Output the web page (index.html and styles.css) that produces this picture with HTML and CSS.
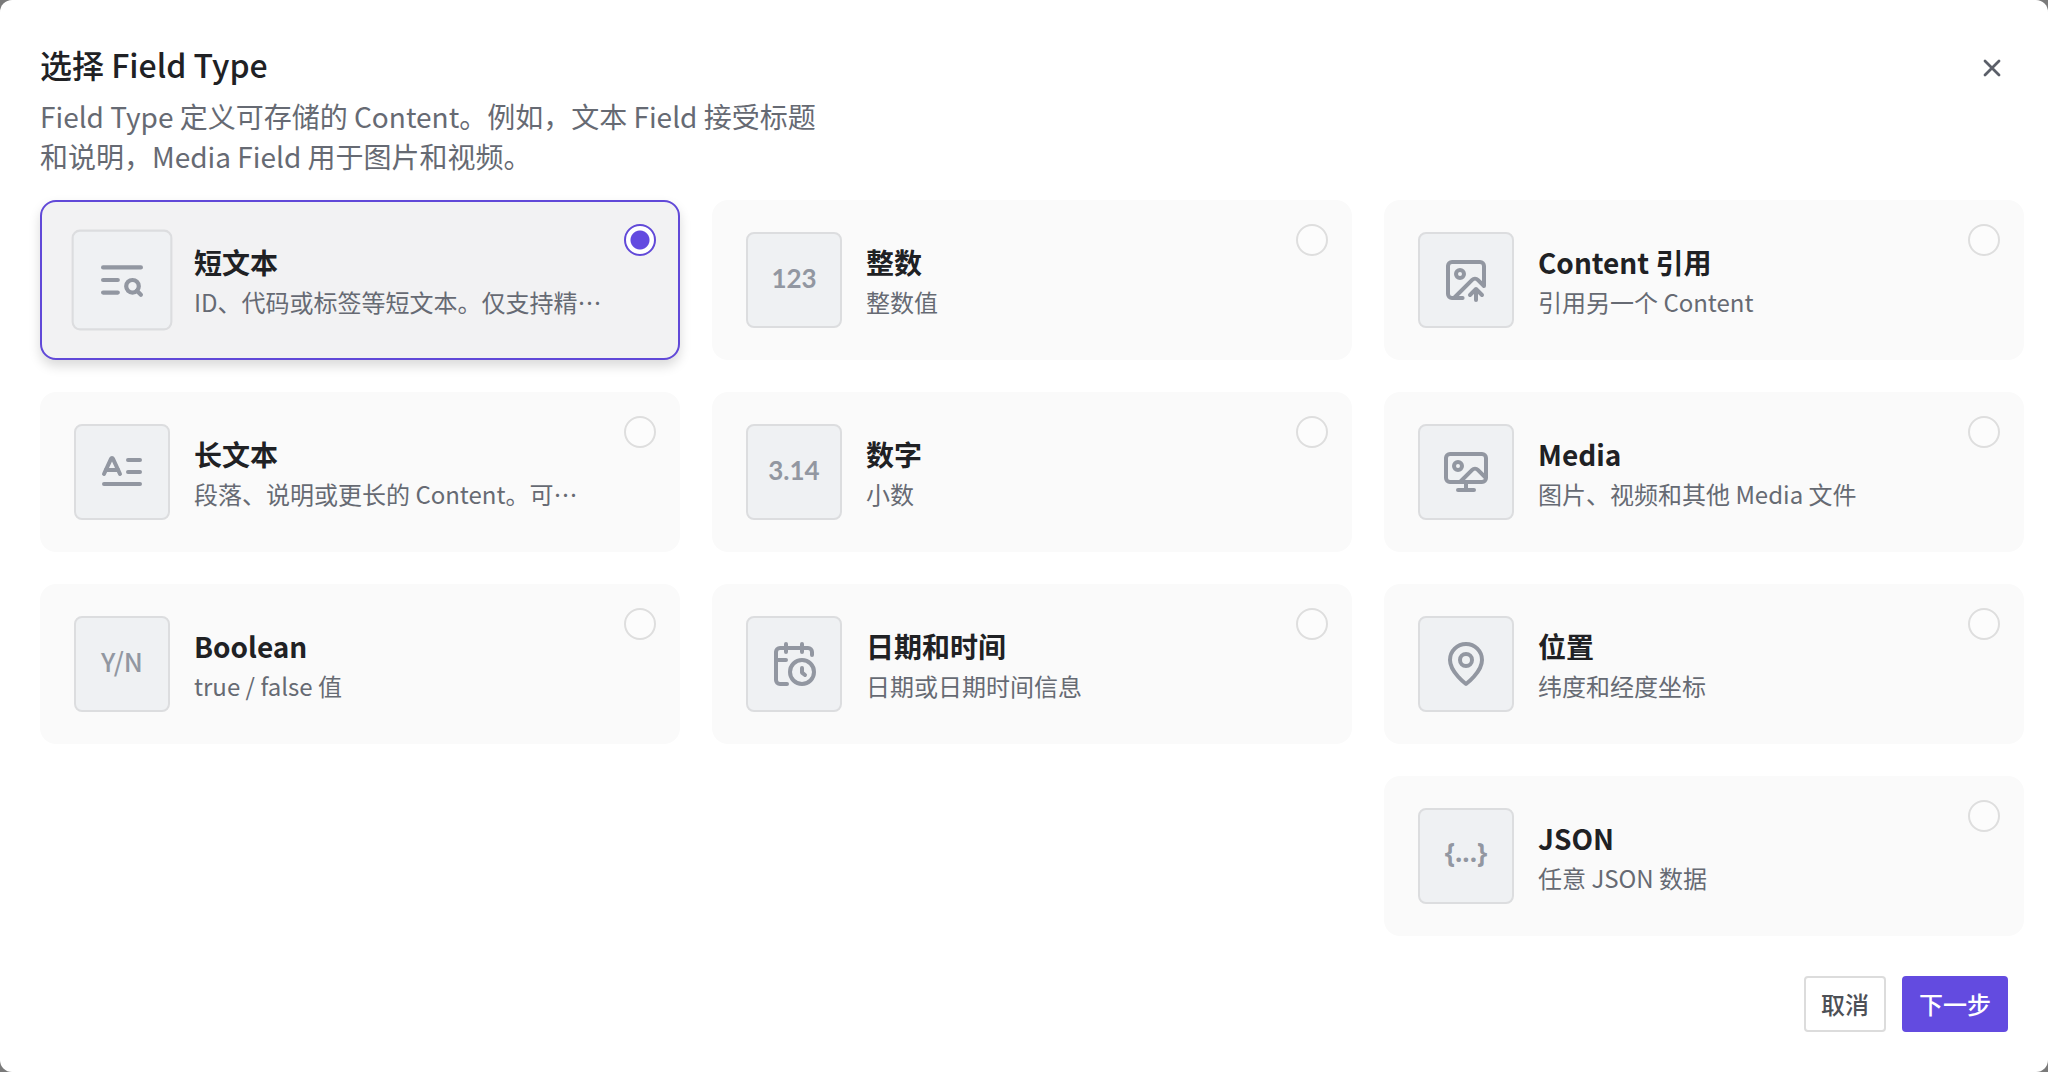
FILE: index.html
```html
<!DOCTYPE html>
<html lang="zh-CN">
<head>
  <meta charset="UTF-8">
  <meta name="viewport" content="width=device-width, initial-scale=1.0">
  <title>选择 Field Type</title>
  <link rel="stylesheet" href="styles.css">
</head>
<body>

  <form class="dialog">
    <header class="dialog-header">
      <div class="heading">
        <h1>选择 Field Type</h1>
        <p>Field Type 定义可存储的 Content。例如，文本 Field 接受标题和说明，Media Field 用于图片和视频。</p>
      </div>
      <button type="button" class="close-button" aria-label="关闭">
        <svg class="close-icon" viewBox="0 0 24 24"><path d="M18 6 6 18M6 6l12 12"/></svg>
      </button>
    </header>

    <div class="columns">
      <div class="column">
        <label class="card">
          <span class="icon-box">
            <svg class="icon" viewBox="0 0 24 24">
              <path d="M21 6H3M10 12H3M10 18H3"/>
              <circle cx="17" cy="15" r="3"/>
              <path d="m21 19-1.9-1.9"/>
            </svg>
          </span>
          <span class="card-text">
            <span class="card-title">短文本</span>
            <span class="card-desc">ID、代码或标签等短文本。仅支持精…</span>
          </span>
          <input type="radio" name="fieldType" value="short" checked>
        </label>

        <label class="card">
          <span class="icon-box">
            <svg class="icon" viewBox="0 0 24 24">
              <path d="M15 12h6M15 6h6"/>
              <path d="m3 13 3.553-7.724a.5.5 0 0 1 .894 0L11 13"/>
              <path d="M3 18h18M3.92 11h6.16"/>
            </svg>
          </span>
          <span class="card-text">
            <span class="card-title">长文本</span>
            <span class="card-desc">段落、说明或更长的 Content。可…</span>
          </span>
          <input type="radio" name="fieldType" value="long">
        </label>

        <label class="card">
          <span class="icon-box"><span class="glyph glyph-boolean">Y/N</span></span>
          <span class="card-text">
            <span class="card-title">Boolean</span>
            <span class="card-desc">true / false 值</span>
          </span>
          <input type="radio" name="fieldType" value="boolean">
        </label>
      </div>

      <div class="column">
        <label class="card">
          <span class="icon-box"><span class="glyph">123</span></span>
          <span class="card-text">
            <span class="card-title">整数</span>
            <span class="card-desc">整数值</span>
          </span>
          <input type="radio" name="fieldType" value="integer">
        </label>

        <label class="card">
          <span class="icon-box"><span class="glyph">3.14</span></span>
          <span class="card-text">
            <span class="card-title">数字</span>
            <span class="card-desc">小数</span>
          </span>
          <input type="radio" name="fieldType" value="number">
        </label>

        <label class="card">
          <span class="icon-box">
            <svg class="icon" viewBox="0 0 24 24">
              <path d="M21 7.5V6a2 2 0 0 0-2-2H5a2 2 0 0 0-2 2v14a2 2 0 0 0 2 2h3.5"/>
              <path d="M16 2v4M8 2v4M3 10h5"/>
              <path d="M17.5 17.5 16 16.3V14"/>
              <circle cx="16" cy="16" r="6"/>
            </svg>
          </span>
          <span class="card-text">
            <span class="card-title">日期和时间</span>
            <span class="card-desc">日期或日期时间信息</span>
          </span>
          <input type="radio" name="fieldType" value="datetime">
        </label>
      </div>

      <div class="column">
        <label class="card">
          <span class="icon-box">
            <svg class="icon" viewBox="0 0 24 24">
              <path d="M10.3 21H5a2 2 0 0 1-2-2V5a2 2 0 0 1 2-2h14a2 2 0 0 1 2 2v10l-3.1-3.1a2 2 0 0 0-2.814.014L6 21"/>
              <path d="m14 19.5 3-3 3 3M17 22v-5.5"/>
              <circle cx="9" cy="9" r="2"/>
            </svg>
          </span>
          <span class="card-text">
            <span class="card-title">Content 引用</span>
            <span class="card-desc">引用另一个 Content</span>
          </span>
          <input type="radio" name="fieldType" value="reference">
        </label>

        <label class="card">
          <span class="icon-box">
            <svg class="icon" viewBox="0 0 24 24">
              <circle cx="8" cy="9" r="2"/>
              <path d="m9 17 6.1-6.1a2 2 0 0 1 2.81.01L22 15V5a2 2 0 0 0-2-2H4a2 2 0 0 0-2 2v10a2 2 0 0 0 2 2h16a2 2 0 0 0 2-2"/>
              <path d="M8 21h8M12 17v4"/>
            </svg>
          </span>
          <span class="card-text">
            <span class="card-title">Media</span>
            <span class="card-desc">图片、视频和其他 Media 文件</span>
          </span>
          <input type="radio" name="fieldType" value="media">
        </label>

        <label class="card">
          <span class="icon-box">
            <svg class="icon" viewBox="0 0 24 24">
              <path d="M20 10c0 6-8 12-8 12s-8-6-8-12a8 8 0 0 1 16 0Z"/>
              <circle cx="12" cy="10" r="3"/>
            </svg>
          </span>
          <span class="card-text">
            <span class="card-title">位置</span>
            <span class="card-desc">纬度和经度坐标</span>
          </span>
          <input type="radio" name="fieldType" value="location">
        </label>

        <label class="card">
          <span class="icon-box"><span class="glyph glyph-json">{...}</span></span>
          <span class="card-text">
            <span class="card-title">JSON</span>
            <span class="card-desc">任意 JSON 数据</span>
          </span>
          <input type="radio" name="fieldType" value="json">
        </label>
      </div>
    </div>

    <footer class="dialog-footer">
      <button type="button" class="button">取消</button>
      <button type="submit" class="button button-primary">下一步</button>
    </footer>
  </form>

</body>
</html>
```
FILE: styles.css
```css
/* General Styles */
* {
  box-sizing: border-box;
}

body {
  margin: 0;
  background-color: #7a7a7a;
  color: #202124;
  font-family: "Noto Sans CJK SC", "Noto Sans", sans-serif;
}

button {
  font-family: inherit;
  cursor: pointer;
}

.dialog {
  min-height: 100vh;
  padding: 40px 24px 40px 40px;
  background-color: #ffffff;
  border-radius: 12px;
}

/* Header */
.dialog-header {
  display: flex;
  justify-content: space-between;
  align-items: flex-start;
  margin-bottom: 24px;
}

.heading {
  max-width: 800px;
}

h1 {
  margin: 0 0 8px;
  font-size: 32px;
  line-height: 48px;
  font-weight: 500;
}

.heading p {
  margin: 0;
  color: #666a73;
  font-size: 28px;
  line-height: 40px;
}

.close-button {
  display: flex;
  margin-top: 12px;
  margin-right: 16px;
  padding: 2px;
  border: none;
  background: none;
}

.close-icon {
  width: 28px;
  height: 28px;
  fill: none;
  stroke: #5b5f69;
  stroke-width: 2.4;
  stroke-linecap: round;
}

/* Cards */
.columns {
  display: grid;
  grid-template-columns: repeat(3, 1fr);
  gap: 32px;
}

.column {
  display: flex;
  flex-direction: column;
  gap: 32px;
  min-width: 0;
}

.card {
  display: flex;
  align-items: center;
  padding: 22px 22px 22px 32px;
  min-height: 160px;
  border: 2px solid transparent;
  border-radius: 16px;
  background-color: #fafafa;
  cursor: pointer;
}

.card:has(input:checked) {
  border-color: #6149d8;
  background-color: #f2f2f3;
  box-shadow: 0 6px 12px rgba(0, 0, 0, 0.15);
}

.icon-box {
  display: flex;
  flex: none;
  align-items: center;
  justify-content: center;
  width: 96px;
  height: 96px;
  border: 2px solid #dcdddf;
  border-radius: 8px;
  background-color: #eff1f3;
  color: #9297a1;
}

.card:has(input:checked) .icon-box {
  transform: scale(1.05);
}

.icon {
  width: 48px;
  height: 48px;
  fill: none;
  stroke: currentColor;
  stroke-width: 2;
  stroke-linecap: round;
  stroke-linejoin: round;
}

.glyph {
  padding-bottom: 4px;
  font-family: Lato, sans-serif;
  font-size: 26px;
  font-weight: 700;
}

.glyph-boolean,
.glyph-json {
  padding-bottom: 8px;
  font-family: "Noto Sans CJK SC", "Noto Sans", sans-serif;
}

.glyph-boolean {
  font-weight: 500;
}

.glyph-json {
  font-family: "Noto Sans", sans-serif;
}

.card-text {
  flex: 1;
  min-width: 0;
  margin: 0 16px 0 24px;
  padding-top: 4px;
}

.card-title,
.card-desc {
  display: block;
  overflow: hidden;
  line-height: 40px;
  white-space: nowrap;
  text-overflow: ellipsis;
}

.card-title {
  font-size: 28px;
  font-weight: 700;
}

.card-desc {
  color: #666a73;
  font-size: 24px;
}

input[type="radio"] {
  appearance: none;
  flex: none;
  align-self: flex-start;
  width: 32px;
  height: 32px;
  margin: 0;
  border: 2px solid #dedede;
  border-radius: 50%;
  background-color: #fcfcfc;
  cursor: pointer;
}

input[type="radio"]:checked {
  border-color: #6149d8;
  background: radial-gradient(circle, #634be0 9px, #ffffff 10px);
}

/* Footer */
.dialog-footer {
  display: flex;
  justify-content: flex-end;
  gap: 16px;
  margin-top: 40px;
  padding-right: 16px;
}

.button {
  height: 56px;
  padding: 0 15px 2px;
  border: 2px solid #dcdcdc;
  border-radius: 4px;
  background-color: #ffffff;
  color: #4d5056;
  font-size: 24px;
  font-weight: 500;
}

.button-primary {
  border-color: #634be0;
  background-color: #634be0;
  color: #ffffff;
}
```
